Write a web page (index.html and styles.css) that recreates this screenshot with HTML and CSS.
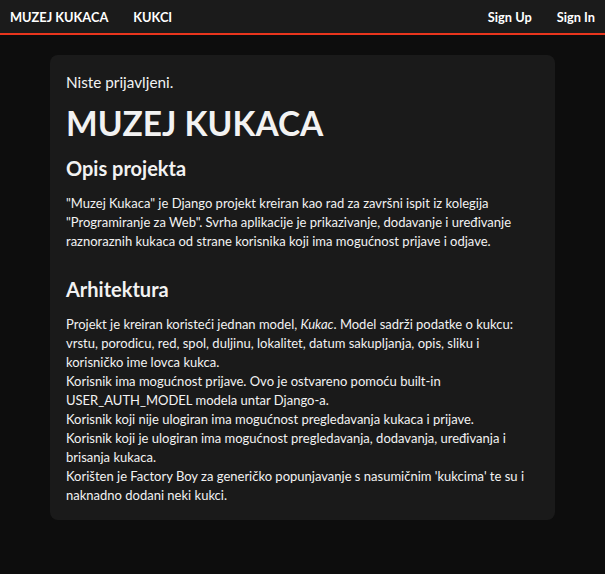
FILE: index.html
```html
<!DOCTYPE html>
<html lang="hr">
<head>
<meta charset="utf-8">
<title>Muzej Kukaca</title>
<link rel="stylesheet" href="styles.css">
</head>
<body>
<nav class="navbar">
  <div class="nav-left">
    <a class="brand" href="#">MUZEJ KUKACA</a>
    <a class="nav-link" href="#">KUKCI</a>
  </div>
  <div class="nav-right">
    <a class="nav-link" href="#">Sign Up</a>
    <a class="nav-link" href="#">Sign In</a>
  </div>
</nav>
<main class="page">
  <section class="card">
    <p class="status">Niste prijavljeni.</p>
    <h1 class="title">MUZEJ KUKACA</h1>
    <h2 class="subtitle">Opis projekta</h2>
    <p class="text">"Muzej Kukaca" je Django projekt kreiran kao rad za završni ispit iz kolegija "Programiranje za Web". Svrha aplikacije je prikazivanje, dodavanje i uređivanje raznoraznih kukaca od strane korisnika koji ima mogućnost prijave i odjave.</p>
    <h2 class="subtitle section">Arhitektura</h2>
    <p class="text last">Projekt je kreiran koristeći jednan model, <em>Kukac</em>. Model sadrži podatke o kukcu: vrstu, porodicu, red, spol, duljinu, lokalitet, datum sakupljanja, opis, sliku i korisničko ime lovca kukca.<br>Korisnik ima mogućnost prijave. Ovo je ostvareno pomoću built-in USER_AUTH_MODEL modela untar Django-a.<br>Korisnik koji nije ulogiran ima mogućnost pregledavanja kukaca i prijave.<br>Korisnik koji je ulogiran ima mogućnost pregledavanja, dodavanja, uređivanja i brisanja kukaca.<br>Korišten je Factory Boy za generičko popunjavanje s nasumičnim 'kukcima' te su i naknadno dodani neki kukci.</p>
  </section>
</main>
</body>
</html>
```
FILE: styles.css
```css
* { box-sizing: border-box; }
html, body {
  margin: 0;
  background: #0d0d0d;
  color: #f2f2f2;
  font-family: Lato, "Noto Sans", sans-serif;
}
.navbar {
  display: flex;
  justify-content: space-between;
  align-items: center;
  height: 35px;
  background: #1b1b1b;
  border-bottom: 2px solid #e8351d;
  padding: 0 10px;
}
.nav-left, .nav-right {
  display: flex;
  align-items: center;
  gap: 25px;
}
.nav-left a, .nav-right a {
  color: #ffffff;
  text-decoration: none;
  font-weight: 700;
  font-size: 12.8px;
}
.page {
  padding: 20px 50px;
}
.card {
  background: #1a1a1a;
  border-radius: 8px;
  padding: 18px 16px 15px;
}
.status {
  margin: 0 0 12px;
  font-size: 15.3px;
  line-height: 19px;
}
.title {
  margin: 0 0 14px;
  font-size: 33.5px;
  line-height: 38px;
  font-weight: 700;
}
.subtitle {
  margin: 0 0 14px;
  font-size: 20px;
  line-height: 24px;
  font-weight: 700;
}
.subtitle.section { margin-top: 26px; }
.text {
  margin: 0;
  font-size: 13px;
  line-height: 19px;
}
```
